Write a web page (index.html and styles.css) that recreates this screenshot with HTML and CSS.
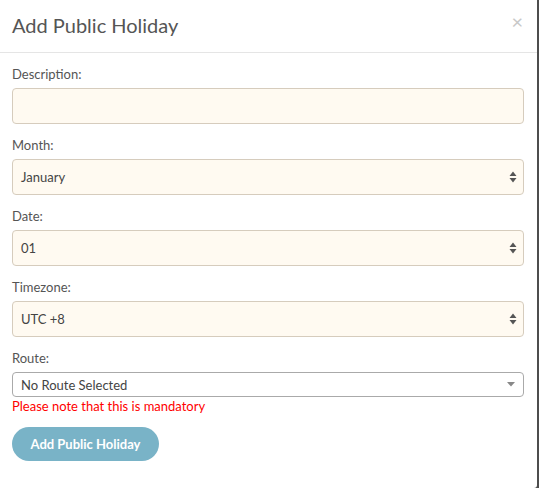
FILE: index.html
```html
<!DOCTYPE html>
<html>
<head>
<meta charset="utf-8">
<link rel="stylesheet" href="styles.css">
</head>
<body>
<div class="modal">
  <div class="modal-header">
    <h4 class="modal-title">Add Public Holiday</h4>
    <span class="close">&times;</span>
  </div>
  <div class="modal-body">
    <div class="group">
      <label class="label">Description:</label>
      <div class="field"></div>
    </div>
    <div class="group">
      <label class="label">Month:</label>
      <div class="field select"><span>January</span>
        <svg class="updown" width="8" height="12" viewBox="0 0 8 12"><path d="M4 0.5L7.5 5H0.5z M4 11.5L7.5 7H0.5z" fill="#555"/></svg>
      </div>
    </div>
    <div class="group">
      <label class="label">Date:</label>
      <div class="field select"><span>01</span>
        <svg class="updown" width="8" height="12" viewBox="0 0 8 12"><path d="M4 0.5L7.5 5H0.5z M4 11.5L7.5 7H0.5z" fill="#555"/></svg>
      </div>
    </div>
    <div class="group">
      <label class="label">Timezone:</label>
      <div class="field select"><span>UTC +8</span>
        <svg class="updown" width="8" height="12" viewBox="0 0 8 12"><path d="M4 0.5L7.5 5H0.5z M4 11.5L7.5 7H0.5z" fill="#555"/></svg>
      </div>
    </div>
    <div class="group route-group">
      <label class="label">Route:</label>
      <div class="route"><span>No Route Selected</span>
        <svg width="8" height="5" viewBox="0 0 8 5"><path d="M0 0H8L4 4.5z" fill="#888"/></svg>
      </div>
      <div class="error">Please note that this is mandatory</div>
    </div>
    <button class="btn">Add Public Holiday</button>
  </div>
</div>
</body>
</html>
```
FILE: styles.css
```css
html, body {
  margin: 0;
  padding: 0;
  height: 100%;
}
body {
  background: #4d4d4d;
  font-family: "Lato", "Liberation Sans", sans-serif;
  color: #555;
}
.modal {
  width: 537px;
  height: 488px;
  background: #fff;
  border-bottom-right-radius: 3px;
  box-sizing: border-box;
}
.modal-header {
  height: 53px;
  box-sizing: border-box;
  border-bottom: 1px solid #e5e5e5;
  display: flex;
  justify-content: space-between;
  align-items: flex-start;
  padding: 0 14px 0 12px;
}
.modal-title {
  margin: 13px 0 0 0;
  font-size: 20px;
  font-weight: 400;
  line-height: 24px;
  color: #555;
}
.close {
  margin-top: 9px;
  font-size: 20px;
  line-height: 24px;
  color: #c8c8c8;
}
.modal-body {
  padding: 12px 13px 0 12px;
  display: flex;
  flex-direction: column;
  align-items: flex-start;
}
.group {
  display: flex;
  flex-direction: column;
  width: 100%;
  margin-bottom: 12px;
}
.label {
  font-size: 13px;
  line-height: 18px;
  color: #555;
  margin-bottom: 5px;
}
.field {
  height: 36px;
  box-sizing: border-box;
  background: #fffaf1;
  border: 1px solid #d6ccbd;
  border-radius: 4px;
  display: flex;
  align-items: center;
  justify-content: space-between;
  padding: 0 6px 0 8px;
  font-size: 13px;
  color: #444;
}
.route {
  height: 25px;
  box-sizing: border-box;
  background: #fff;
  border: 1px solid #aaa;
  border-radius: 4px;
  display: flex;
  align-items: center;
  justify-content: space-between;
  padding: 0 8px 0 8px;
  font-size: 13px;
  color: #444;
}
.route-group {
  margin-bottom: 12px;
}
.error {
  font-size: 13px;
  line-height: 18px;
  color: #f00;
}
.btn {
  width: 147px;
  height: 34px;
  border: none;
  border-radius: 17px;
  background: #79b3c7;
  color: #fff;
  font-family: "Lato", "Liberation Sans", sans-serif;
  font-size: 13px;
  font-weight: 700;
  padding: 0;
}
```
